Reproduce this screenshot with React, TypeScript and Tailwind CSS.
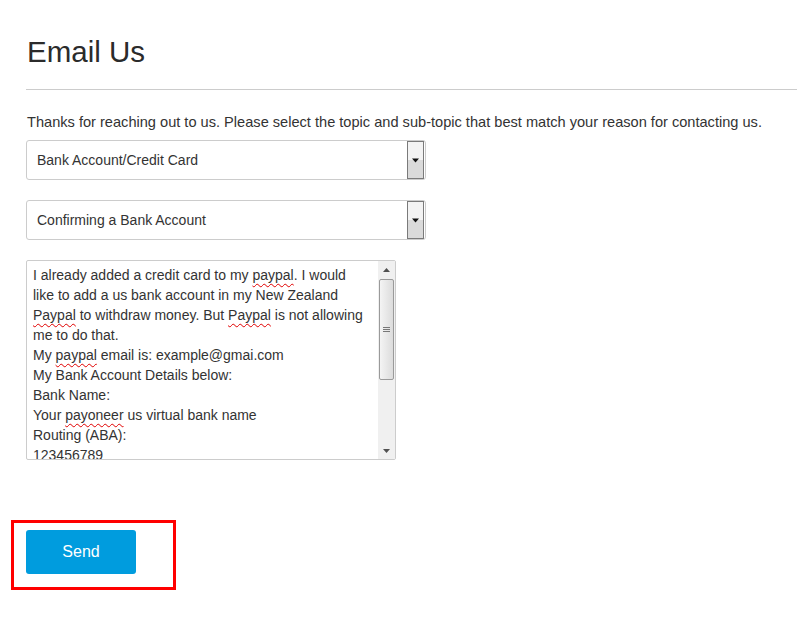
import React from "react";

function FakeSelect({ value }: { value: string }) {
  return (
    <div className="relative flex h-[40px] w-[400px] items-center rounded-[3px] border border-[#cccccc] bg-white pl-[10px]">
      <span className="text-[14px] text-[#333333]">{value}</span>
      <div className="absolute right-[1px] top-[0px] flex h-[38px] w-[17px] flex-col border border-[#7a7a7a]">
        <div className="h-1/2 bg-[#f3f3f3]" />
        <div className="h-1/2 bg-[#dadada]" />
        <svg className="absolute left-[3px] top-[16px]" width="9" height="5" viewBox="0 0 9 5">
          <path d="M1 0.5 H8 L4.5 4.5 Z" fill="#111" />
        </svg>
      </div>
    </div>
  );
}

function Sq({ children }: { children: React.ReactNode }) {
  return (
    <span className="underline decoration-wavy decoration-[#e00000] decoration-1 underline-offset-[3px]">
      {children}
    </span>
  );
}

const lines: React.ReactNode[] = [
  <>I already added a credit card to my <Sq>paypal</Sq>. I would</>,
  <>like to add a us bank account in my New Zealand</>,
  <><Sq>Paypal</Sq> to withdraw money. But <Sq>Paypal</Sq> is not allowing</>,
  <>me to do that.</>,
  <>My <Sq>paypal</Sq> email is: example@gmai.com</>,
  <>My Bank Account Details below:</>,
  <>Bank Name:</>,
  <>Your <Sq>payoneer</Sq> us virtual bank name</>,
  <>Routing (ABA):</>,
  <>123456789</>,
];

export default function App() {
  return (
    <div
      className="min-h-[627px] w-[797px] bg-white text-[#333333]"
      style={{ fontFamily: '"Liberation Sans", Arial, sans-serif' }}
    >
      <div className="pl-[26px] pt-[33px]">
        <h1 className="pl-[1px] text-[29.5px] leading-[38px] text-[#2b2b2b]">Email Us</h1>
        <div className="mt-[18px] h-[1px] bg-[#cccccc]" />
        <p className="mt-[22px] pl-[1px] text-[14.6px] leading-[20px]">
          Thanks for reaching out to us. Please select the topic and sub-topic that best match your reason for contacting us.
        </p>
        <div className="mt-[8px] flex flex-col gap-[20px]">
          <FakeSelect value="Bank Account/Credit Card" />
          <FakeSelect value="Confirming a Bank Account" />
          <div className="relative h-[200px] w-[370px] overflow-hidden rounded-[2px] border border-[#cccccc] bg-white">
            <div className="pl-[6px] pt-[4px] text-[14px] leading-[20px]">
              {lines.map((l, i) => (
                <div key={i} className="whitespace-nowrap">
                  {l}
                </div>
              ))}
            </div>
            <div className="absolute right-0 top-0 flex h-full w-[17px] flex-col bg-[#f0f0f0]">
              <div className="flex h-[18px] items-center justify-center">
                <svg width="7" height="4" viewBox="0 0 7 4">
                  <path d="M0 4 L3.5 0 L7 4 Z" fill="#505050" />
                </svg>
              </div>
              <div className="mx-[1px] flex h-[101px] items-center justify-center rounded-[2px] border border-[#9a9a9a] bg-gradient-to-r from-[#f4f4f4] to-[#dcdcdc]">
                <div className="flex flex-col gap-[1px]">
                  <div className="h-[1px] w-[7px] bg-[#777]" />
                  <div className="h-[1px] w-[7px] bg-[#777]" />
                  <div className="h-[1px] w-[7px] bg-[#777]" />
                </div>
              </div>
              <div className="flex-1" />
              <div className="flex h-[17px] items-center justify-center">
                <svg width="7" height="4" viewBox="0 0 7 4">
                  <path d="M0 0 L3.5 4 L7 0 Z" fill="#505050" />
                </svg>
              </div>
            </div>
          </div>
        </div>
        <div className="mt-[60px] -ml-[15px] w-[165px] border-[3px] border-[#ff0000] pb-[13px] pl-[12px] pt-[7px]">
          <button className="flex h-[44px] w-[110px] items-center justify-center rounded-[3px] bg-[#009cde] text-[16px] text-white">
            Send
          </button>
        </div>
      </div>
    </div>
  );
}
